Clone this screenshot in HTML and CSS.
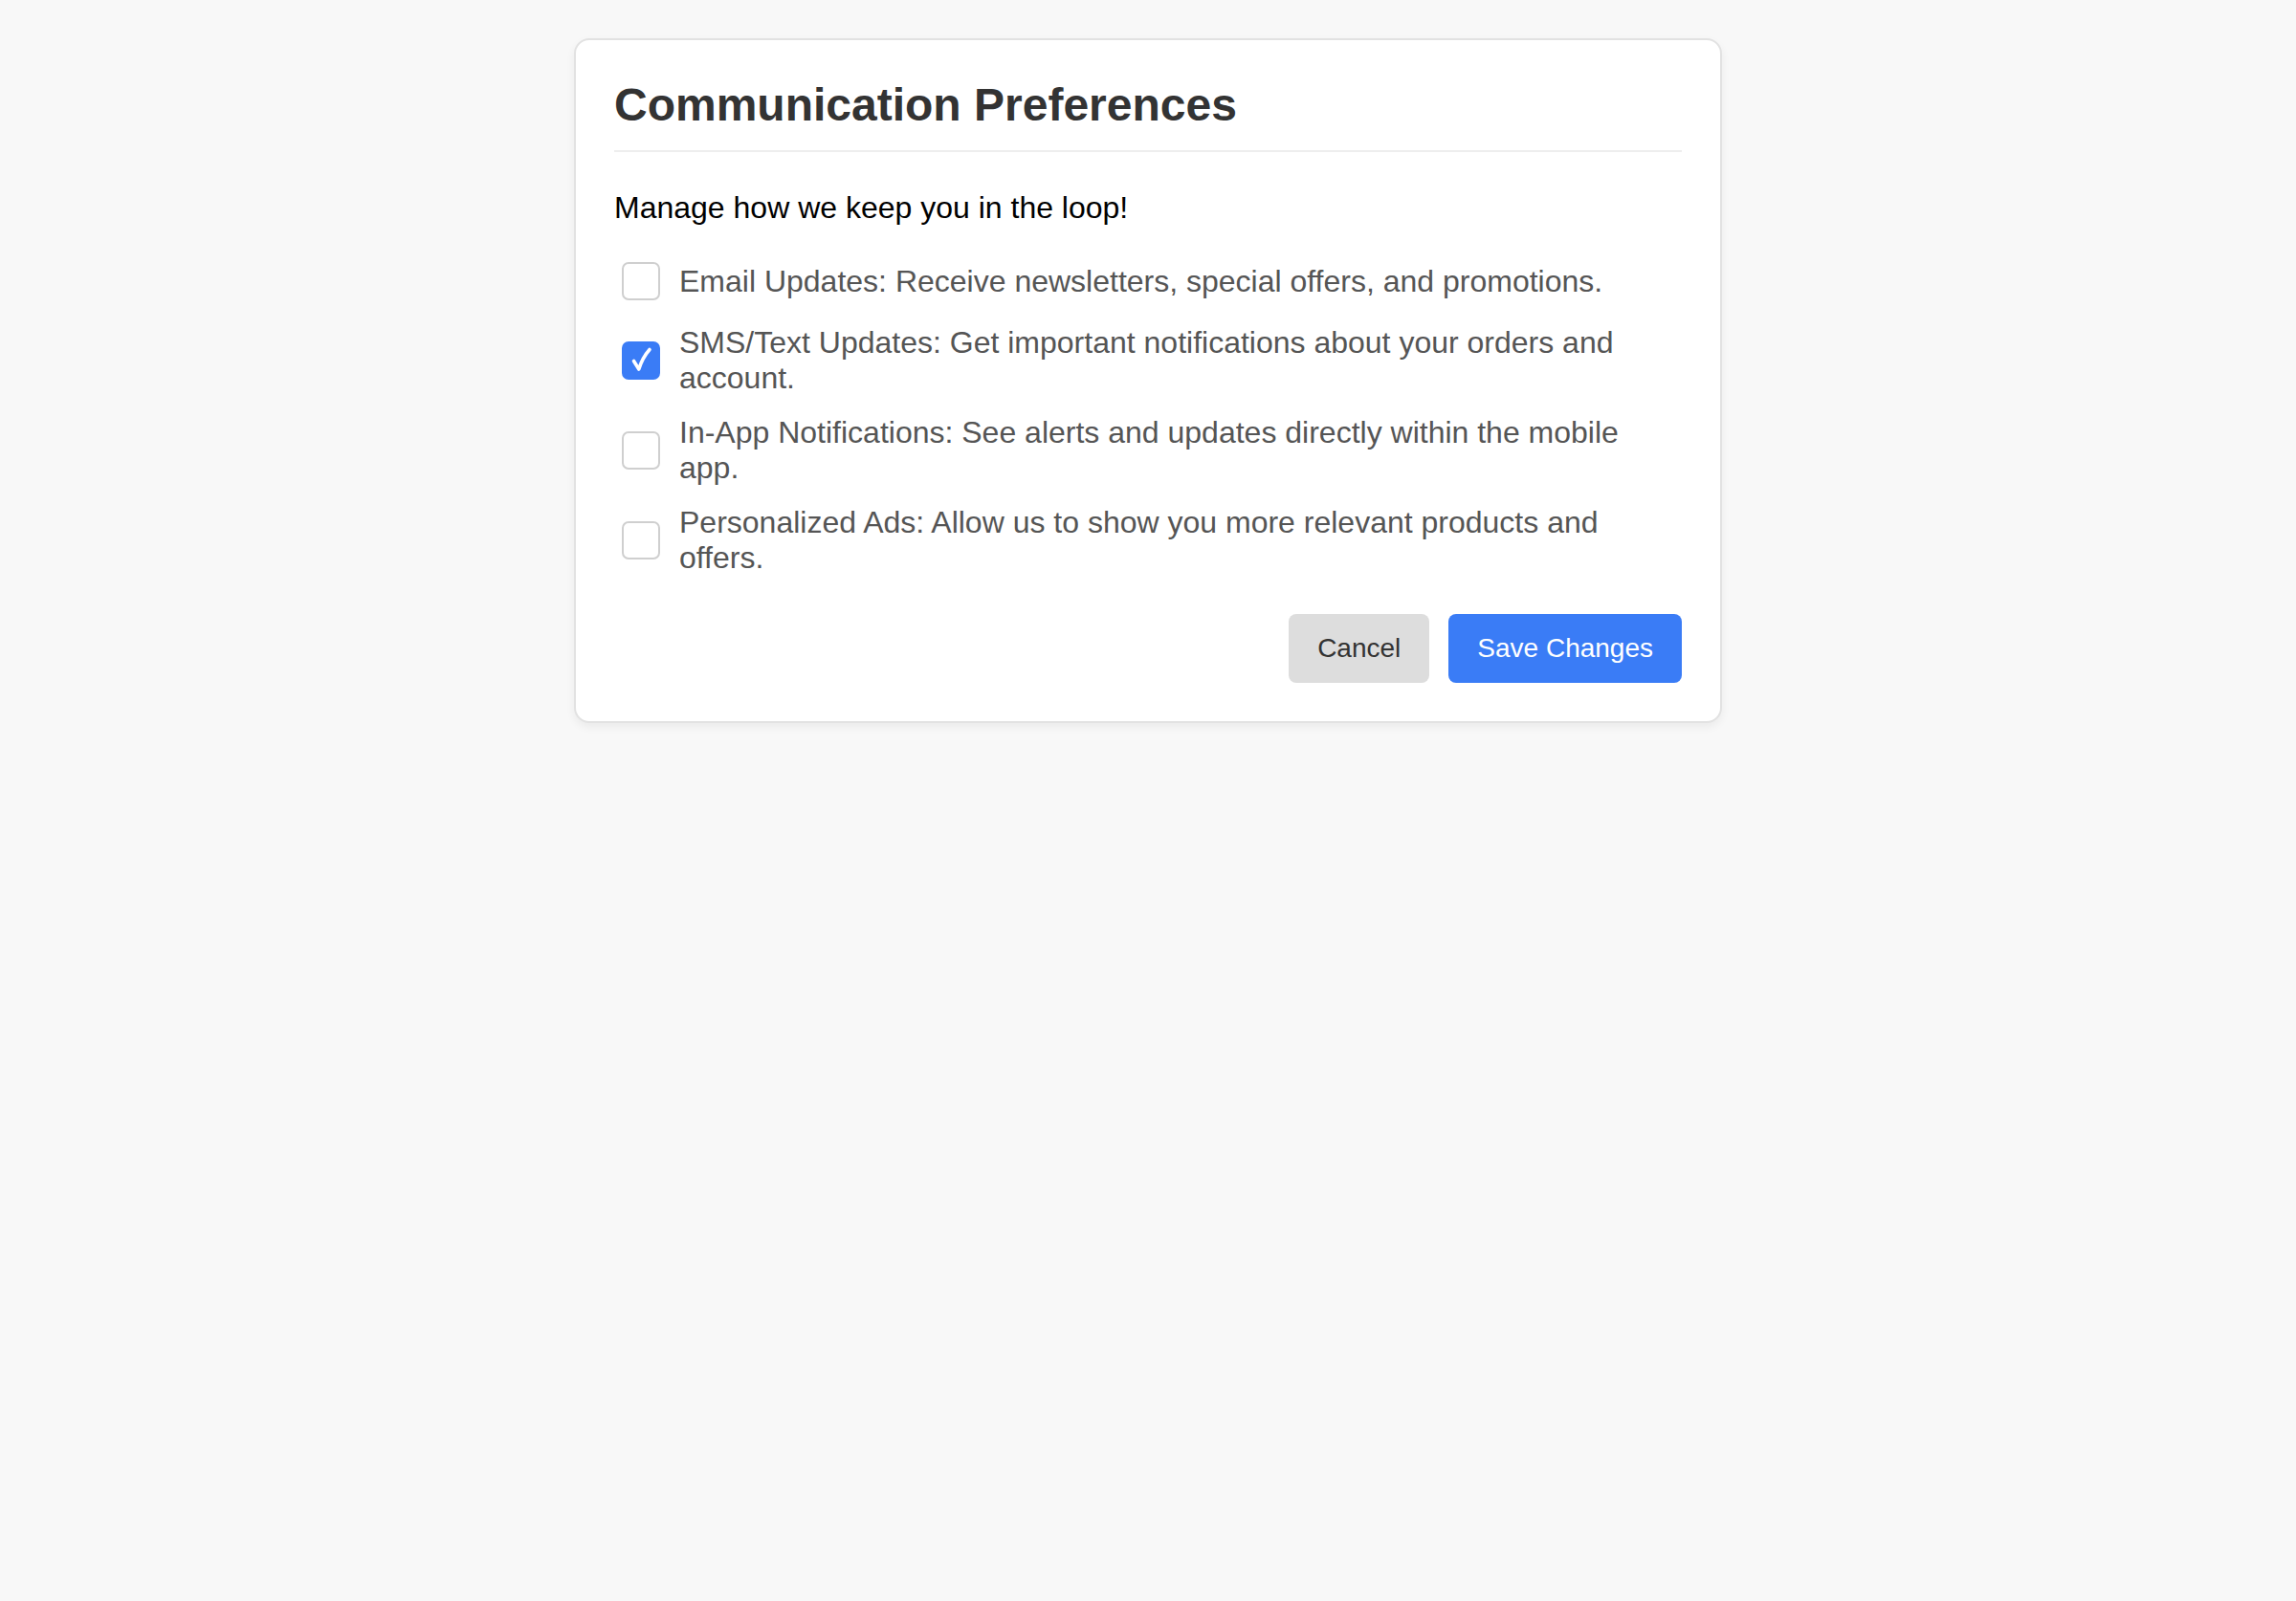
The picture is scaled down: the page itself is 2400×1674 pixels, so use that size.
FILE: index.html
```html
<!DOCTYPE html>
<html lang="en">
<head>
<meta charset="utf-8">
<title>Communication Preferences</title>
<link rel="stylesheet" href="styles.css">
</head>
<body>
  <div class="card">
    <h2 class="title">Communication Preferences</h2>
    <p class="intro">Manage how we keep you in the loop!</p>
    <div class="option">
      <span class="box"></span>
      <span class="label">Email Updates: Receive newsletters, special offers, and promotions.</span>
    </div>
    <div class="option">
      <span class="box checked"><svg width="40" height="40" viewBox="0 0 40 40"><path d="M12.5 20.5 L17.8 29 Q21.5 17 29 8.5" fill="none" stroke="#ffffff" stroke-width="3.6" stroke-linecap="round" stroke-linejoin="round"/></svg></span>
      <span class="label">SMS/Text Updates: Get important notifications about your orders and account.</span>
    </div>
    <div class="option">
      <span class="box"></span>
      <span class="label">In-App Notifications: See alerts and updates directly within the mobile app.</span>
    </div>
    <div class="option">
      <span class="box"></span>
      <span class="label">Personalized Ads: Allow us to show you more relevant products and offers.</span>
    </div>
    <div class="actions">
      <button class="btn btn-cancel">Cancel</button>
      <button class="btn btn-save">Save Changes</button>
    </div>
  </div>
</body>
</html>
```
FILE: styles.css
```css
html, body {
  margin: 0;
  padding: 0;
}
body {
  background: #f8f8f8;
  font-family: "Liberation Sans", Arial, sans-serif;
  padding-top: 40px;
  padding-bottom: 40px;
}
.card {
  box-sizing: border-box;
  width: 1200px;
  margin: 0 auto;
  background: #ffffff;
  border: 2px solid #e2e2e2;
  border-radius: 16px;
  box-shadow: 0 4px 10px rgba(0, 0, 0, 0.06);
  padding: 40px;
}
.title {
  margin: 0 0 40px 0;
  padding-bottom: 20px;
  border-bottom: 2px solid #eeeeee;
  font-size: 48px;
  font-weight: bold;
  line-height: normal;
  color: #333333;
}
.intro {
  margin: 0 0 32px 0;
  font-size: 32px;
  line-height: normal;
  color: #000000;
}
.option {
  display: flex;
  align-items: center;
  margin-bottom: 20px;
}
.box {
  flex: 0 0 auto;
  box-sizing: border-box;
  width: 40px;
  height: 40px;
  margin: 6px 20px 6px 8px;
  border: 2px solid #cfcfcf;
  border-radius: 7px;
  background: #ffffff;
  display: flex;
  align-items: center;
  justify-content: center;
}
.box.checked {
  background: #3a7cf6;
  border-color: #3a7cf6;
}
.box svg {
  display: block;
  flex: 0 0 auto;
}
.label {
  font-size: 32px;
  line-height: normal;
  color: #555555;
}
.actions {
  display: flex;
  justify-content: flex-end;
  gap: 20px;
  margin-top: 40px;
}
.btn {
  font-family: "Liberation Sans", Arial, sans-serif;
  font-size: 28px;
  line-height: normal;
  padding: 20px 30px;
  border: none;
  border-radius: 8px;
  cursor: pointer;
}
.btn-cancel {
  background: #dddddd;
  color: #333333;
}
.btn-save {
  background: #3a7cf6;
  color: #ffffff;
}
```
